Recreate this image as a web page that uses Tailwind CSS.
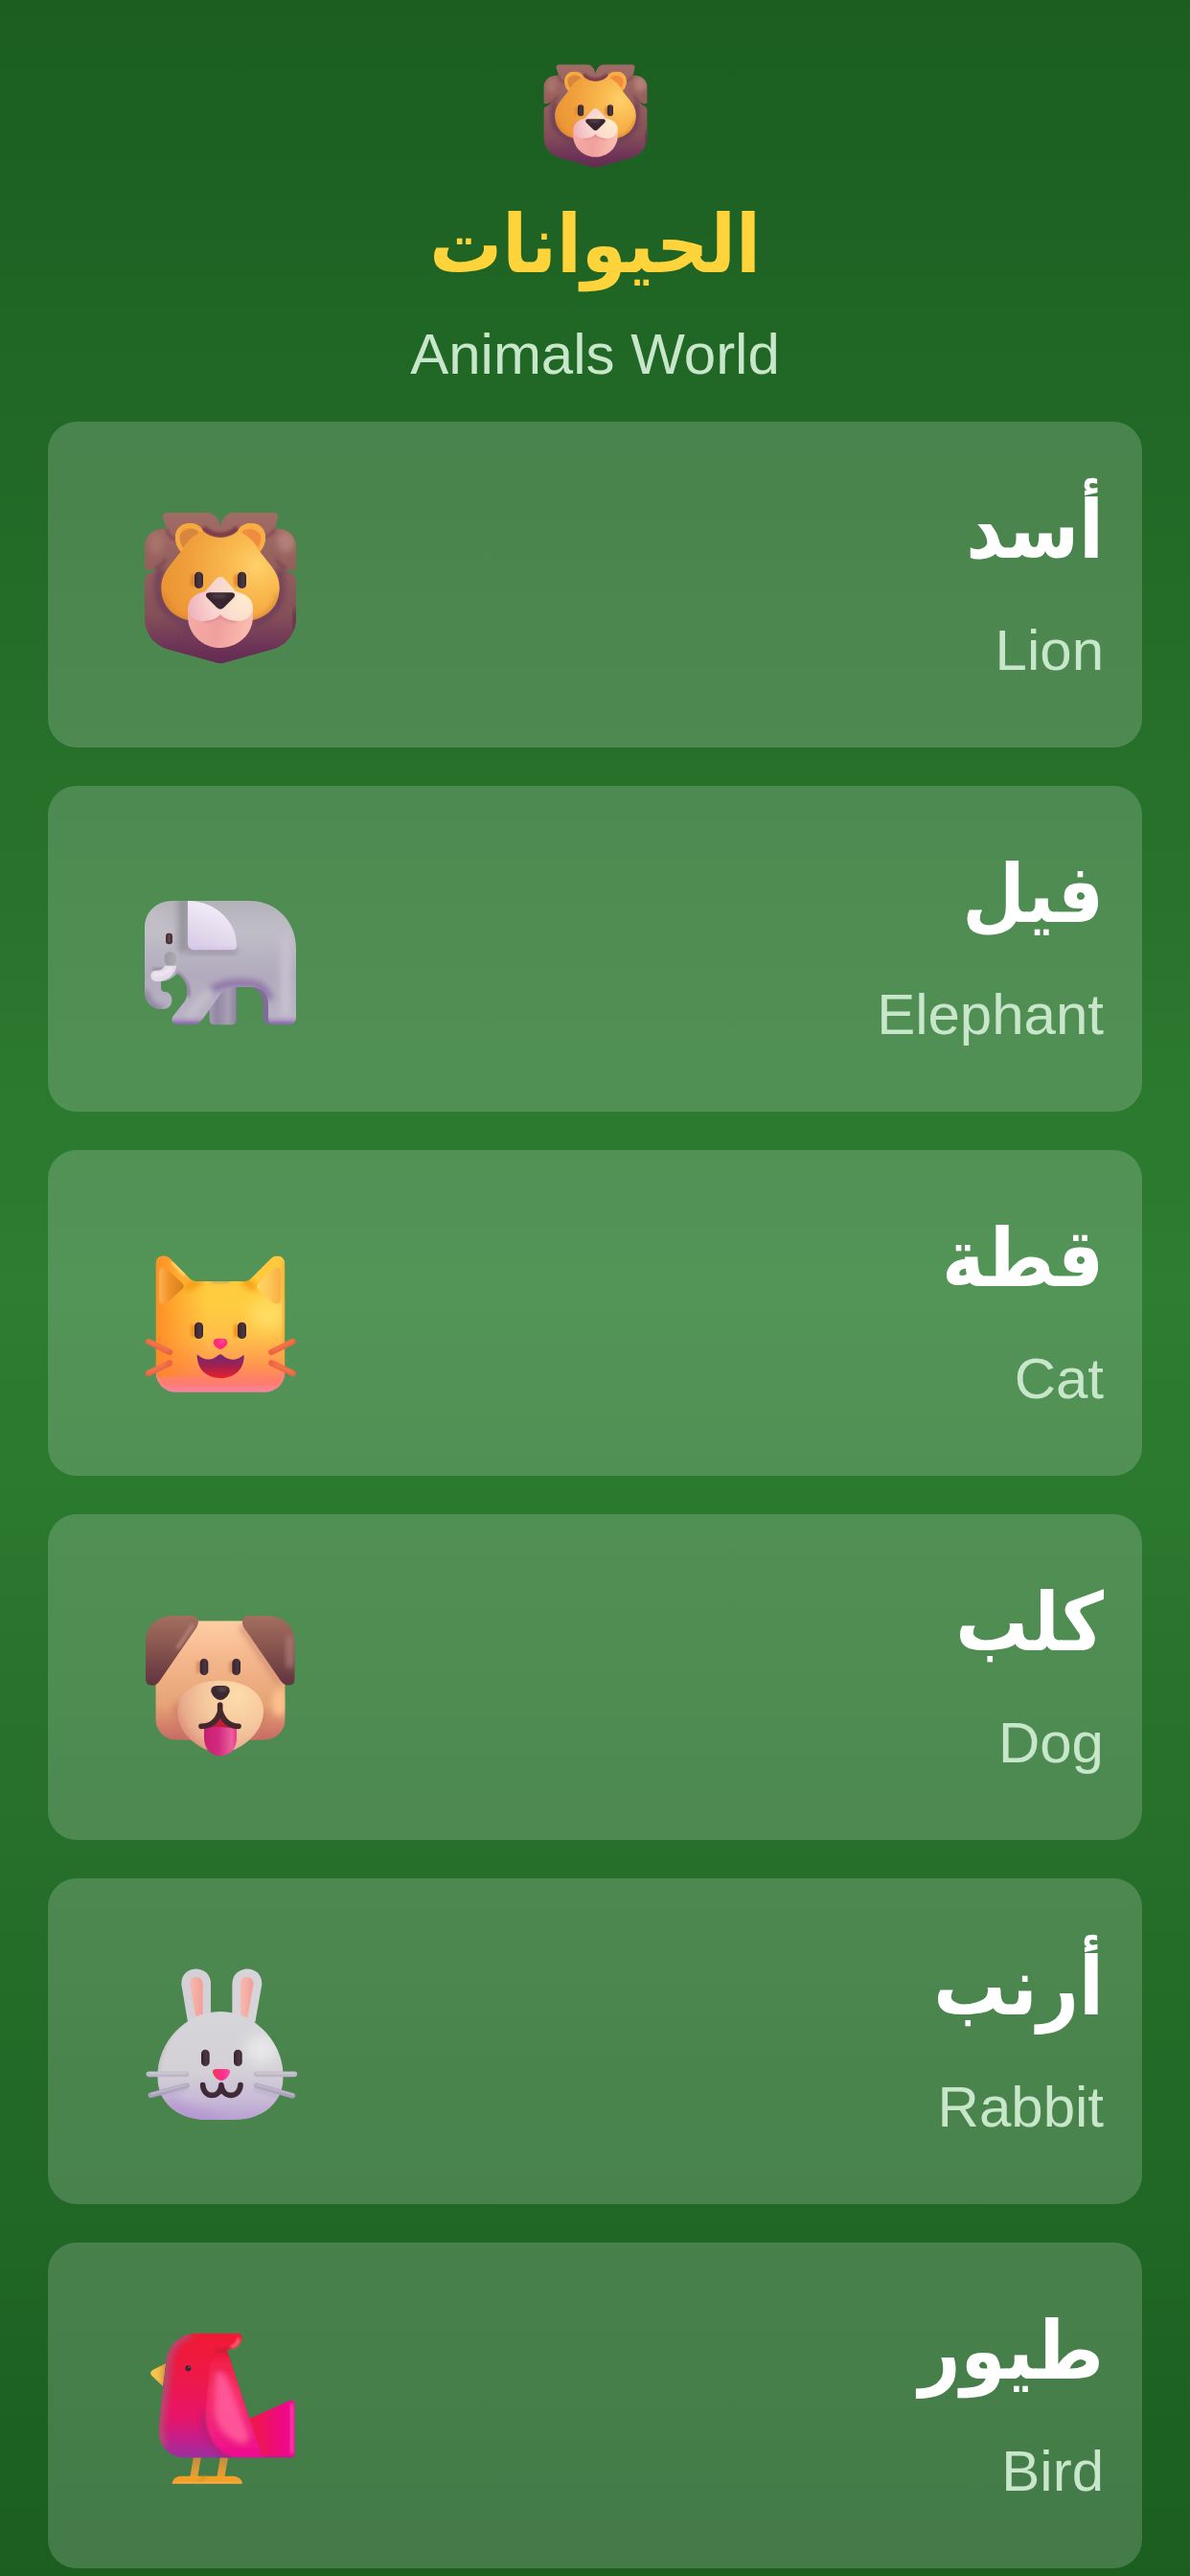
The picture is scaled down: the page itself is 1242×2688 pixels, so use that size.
<!DOCTYPE html>
<html lang="ar">
<head>
<meta charset="utf-8">
<meta name="viewport" content="width=device-width, initial-scale=1">
<title>الحيوانات</title>
<script src="https://cdn.jsdelivr.net/npm/@tailwindcss/browser@4"></script>
</head>
<body class="min-h-screen bg-linear-to-b from-[#1b5e20] via-[#2e7d32] to-[#1b5e20] font-['Liberation_Sans',Arial,'DejaVu_Sans_Condensed','DejaVu_Sans',sans-serif]">

<!-- Shared gradients and the lion, which is drawn twice -->
<svg class="absolute size-0" aria-hidden="true">
  <defs>
    <filter id="b4" x="-50%" y="-50%" width="200%" height="200%"><feGaussianBlur stdDeviation="4"/></filter>
    <filter id="b10" x="-50%" y="-50%" width="200%" height="200%"><feGaussianBlur stdDeviation="10"/></filter>
    <filter id="b20" x="-60%" y="-60%" width="220%" height="220%"><feGaussianBlur stdDeviation="20"/></filter>
    <linearGradient id="eye" x1="0" x2="1" y1="0" y2="0"><stop offset="0" stop-color="#33232c"/><stop offset=".65" stop-color="#4b3744"/><stop offset="1" stop-color="#38242f"/></linearGradient>

    <linearGradient id="mane" x1="0" x2="0" y1="75" y2="545" gradientUnits="userSpaceOnUse"><stop offset="0" stop-color="#a06c66"/><stop offset=".35" stop-color="#96605d"/><stop offset=".68" stop-color="#855058"/><stop offset=".88" stop-color="#6f3558"/><stop offset="1" stop-color="#622b50"/></linearGradient>
    <radialGradient id="lionface" cx="415" cy="240" r="300" gradientUnits="userSpaceOnUse"><stop offset="0" stop-color="#ffd06a"/><stop offset=".3" stop-color="#f9b94e"/><stop offset=".7" stop-color="#f0a03c"/><stop offset="1" stop-color="#eb9535"/></radialGradient>
    <radialGradient id="muzzle" cx="375" cy="345" r="180" gradientUnits="userSpaceOnUse"><stop offset="0" stop-color="#ffeccd"/><stop offset=".6" stop-color="#f9d3cf"/><stop offset="1" stop-color="#eeb2bc"/></radialGradient>
    <linearGradient id="chin" x1="200" x2="400" y1="430" y2="460" gradientUnits="userSpaceOnUse"><stop offset="0" stop-color="#f4aba4"/><stop offset=".45" stop-color="#f0a09e"/><stop offset="1" stop-color="#fcc0b0"/></linearGradient>
    <clipPath id="maneclip"><path d="M132 75H262C282 77 296 94 300 118C304 94 318 77 338 75H468Q484 78 479 92L471 126C508 122 536 146 537 180V247Q535 258 522 255L504 248Q508 258 522 265Q537 272 537 286V405C537 450 510 490 462 503L310 545Q300 549 290 545L138 503C90 490 63 450 63 405V286Q63 272 80 265Q94 260 96 248L78 255Q64 258 63 247V180C64 146 92 122 132 126L121 92Q118 78 132 75Z"/></clipPath>
    <clipPath id="lionclip"><path d="M176 197C152 170 152 126 184 112C210 102 238 112 246 133Q268 153 300 153Q332 153 354 133C362 112 390 102 416 112C448 126 448 170 424 197L458 240C480 268 486 290 485 315C482 370 445 405 390 413H210C155 405 118 370 115 315C114 290 120 268 142 240Z"/></clipPath>

    <symbol id="lion" viewBox="0 0 600 600">
      <g clip-path="url(#maneclip)">
        <rect x="50" y="60" width="500" height="500" fill="url(#mane)"/>
        <ellipse cx="505" cy="165" rx="28" ry="34" fill="#b27f77" filter="url(#b10)"/>
        <ellipse cx="100" cy="170" rx="24" ry="34" fill="#a8736c" filter="url(#b10)"/>
        <path d="M132 126Q138 155 165 160M471 126Q462 145 440 150M96 248Q120 240 130 220M504 248Q485 240 475 220" fill="none" stroke="#7a3f4e" stroke-width="8" filter="url(#b4)" opacity=".8"/>
        <path d="M246 122Q270 145 300 145Q330 145 354 122" fill="none" stroke="#7b3b45" stroke-width="16" filter="url(#b4)"/>
        <path d="M115 250Q90 330 125 375Q170 420 200 425V480M485 250Q500 340 470 380Q430 420 400 425" fill="none" stroke="#6d3c58" stroke-width="20" filter="url(#b10)"/>
        <path d="M537 380V440H530" fill="none" stroke="#66304a" stroke-width="24" filter="url(#b10)"/>
      </g>
      <g clip-path="url(#lionclip)">
        <rect x="100" y="90" width="400" height="330" fill="url(#lionface)"/>
        <path d="M176 197C160 165 168 130 205 125Q222 125 236 136Q198 155 176 197Z" fill="#d88540"/>
        <path d="M424 197C440 165 432 130 395 125Q378 125 364 136Q402 155 424 197Z" fill="#f08b3f"/>
        <path d="M176 197C152 170 152 126 184 112C210 102 238 112 246 133" fill="none" stroke="#f6aa3d" stroke-width="28"/>
        <path d="M424 197C448 170 448 126 416 112C390 102 362 112 354 133" fill="none" stroke="#faad42" stroke-width="28"/>
        <path d="M115 330Q135 410 210 416H390Q465 410 485 330" fill="none" stroke="#d97c31" stroke-width="14" filter="url(#b10)"/>
        <rect x="207" y="268" width="16" height="38" rx="8" fill="#d98330" filter="url(#b4)"/>
        <rect x="343" y="268" width="16" height="38" rx="8" fill="#d98330" filter="url(#b4)"/>
      </g>
      <path d="M198 375H402V398C402 455 356 498 300 498S198 455 198 398Z" fill="url(#chin)"/>
      <path d="M250 414Q285 412 300 396Q315 412 350 414" fill="none" stroke="#df8689" stroke-width="9" filter="url(#b4)"/>
      <path d="M284 285Q300 266 316 285L348 322Q402 332 402 374Q398 414 350 414Q315 412 300 394Q285 412 250 414Q202 414 198 374Q202 332 252 322Z" fill="url(#muzzle)"/>
      <path d="M265 325H335Q350 326 343 340L311 372Q300 383 289 372L257 340Q250 326 265 325Z" fill="#38252f"/>
      <ellipse cx="296" cy="336" rx="24" ry="6" fill="#51424b" filter="url(#b4)"/>
      <rect x="219" y="260" width="27" height="52" rx="13" fill="url(#eye)"/>
      <rect x="354" y="260" width="27" height="52" rx="13" fill="url(#eye)"/>
    </symbol>
  </defs>
</svg>

<main class="flex flex-col px-[50px] pt-[50px] pb-2">
  <header class="flex flex-col items-center text-center">
    <svg class="size-[137px]" role="img" aria-label="Lion"><use href="#lion"/></svg>
    <h1 dir="rtl" class="mt-3 text-[84px] leading-[112px] font-bold text-[#ffd43b]">الحيوانات</h1>
    <p lang="en" class="mt-6 text-[60px] leading-[70px] text-[#c8e6c9]">Animals World</p>
  </header>

  <ul class="mt-[35px] flex flex-col gap-10">
    <li class="flex h-[340px] items-center justify-between rounded-[30px] bg-white/18 pr-10 pl-20">
      <svg class="size-[200px]" role="img" aria-label="Lion"><use href="#lion"/></svg>
      <div class="flex flex-col items-end gap-11">
        <h2 dir="rtl" class="text-[84px] leading-[94px] font-bold text-white">أسد</h2>
        <p lang="en" class="text-[60px] leading-[70px] text-[#c8e6c9]">Lion</p>
      </div>
    </li>

    <li class="flex h-[340px] items-center justify-between rounded-[30px] bg-white/18 pr-10 pl-20">
      <svg class="size-[200px]" viewBox="0 -30 600 600" role="img" aria-label="Elephant">
        <defs>
          <linearGradient id="el" x1="0" x2="0" y1="120" y2="508" gradientUnits="userSpaceOnUse"><stop offset="0" stop-color="#b4b3b9"/><stop offset=".25" stop-color="#bfbdc7"/><stop offset=".6" stop-color="#b2abbd"/><stop offset=".93" stop-color="#b9b2c4"/><stop offset="1" stop-color="#9a7bb8"/></linearGradient>
          <linearGradient id="elback" x1="265" x2="350" y1="0" y2="0" gradientUnits="userSpaceOnUse"><stop offset="0" stop-color="#a79ab5"/><stop offset=".3" stop-color="#9288a3"/><stop offset=".7" stop-color="#a79fb3"/><stop offset="1" stop-color="#8f829f"/></linearGradient>
          <linearGradient id="ear" x1="300" x2="250" y1="140" y2="272" gradientUnits="userSpaceOnUse"><stop offset="0" stop-color="#f2ecf8"/><stop offset=".6" stop-color="#e3daec"/><stop offset="1" stop-color="#dacbea"/></linearGradient>
          <linearGradient id="cheek" x1="124" x2="166" y1="0" y2="0" gradientUnits="userSpaceOnUse"><stop offset="0" stop-color="#9b98a2"/><stop offset="1" stop-color="#b1adb8"/></linearGradient>
          <clipPath id="elclip"><path d="M150 120H392C475 120 537 185 537 268V486Q537 508 515 508H472Q450 508 450 486V445C450 408 430 390 395 390H345Q318 390 302 410L245 490Q232 507 214 507H165Q141 503 151 482L190 432C203 405 198 370 165 347Q145 370 114 373V392Q114 405 128 405C156 408 156 458 122 459C88 460 63 438 63 405V205C63 155 100 120 150 120Z"/></clipPath>
        </defs>
        <path d="M290 385H350V492Q350 508 334 508H282Q266 508 266 492V440Z" fill="url(#elback)"/>
        <path d="M395 388H455V508Q433 507 433 484V440Q430 400 395 388Z" fill="#7f6d95"/>
        <g clip-path="url(#elclip)">
          <rect x="60" y="115" width="480" height="400" fill="url(#el)"/>
          <rect x="167" y="110" width="36" height="170" fill="#8f8d94" opacity=".8" filter="url(#b10)"/>
          <rect x="200" y="270" width="152" height="16" fill="#8d8599" opacity=".8" filter="url(#b10)"/>
          <ellipse cx="95" cy="185" rx="28" ry="50" fill="#c2c0c5" filter="url(#b20)"/>
          <path d="M270 400Q310 372 400 380Q440 386 455 430" fill="none" stroke="#8869a5" stroke-width="24" opacity=".85" filter="url(#b10)"/>
          <rect x="489" y="230" width="32" height="250" fill="#c6c0d0" filter="url(#b10)"/>
          <path d="M270 400L200 480" stroke="#c5c0cc" stroke-width="24" filter="url(#b10)"/>
          <rect x="145" y="500" width="100" height="14" fill="#8d66ae" filter="url(#b4)"/>
          <rect x="450" y="500" width="90" height="14" fill="#8d66ae" filter="url(#b4)"/>
          <path d="M63 400Q75 460 122 460" fill="none" stroke="#8a7a9d" stroke-width="20" filter="url(#b10)"/>
          <path d="M165 345Q205 375 200 420" fill="none" stroke="#8e7ba1" stroke-width="10" filter="url(#b4)"/>
          <rect x="88" y="330" width="32" height="8" fill="#8c8597" filter="url(#b4)"/>
        </g>
        <rect x="122" y="268" width="48" height="56" rx="24" fill="#b9b5bf"/>
        <rect x="125" y="279" width="38" height="45" rx="19" fill="url(#cheek)"/>
        <path d="M126 323H163C158 352 132 375 98 372C77 370 76 340 98 338Q118 340 126 323Z" fill="#e4dbea"/>
        <path d="M92 350Q130 355 146 328" fill="none" stroke="#f3eef5" stroke-width="8" filter="url(#b4)"/>
        <path d="M198 120C285 120 351 185 351 260Q350 273 338 273H218Q198 272 198 252Z" fill="url(#ear)"/>
        <rect x="215" y="266" width="125" height="5" fill="#d2bfe6" filter="url(#b4)"/>
        <rect x="129" y="221" width="21" height="35" rx="10" fill="#4b2f3a"/>
        <rect x="137" y="226" width="6" height="24" rx="3" fill="#6a4d50"/>
      </svg>
      <div class="flex flex-col items-end gap-11">
        <h2 dir="rtl" class="text-[84px] leading-[94px] font-bold text-white">فيل</h2>
        <p lang="en" class="text-[60px] leading-[70px] text-[#c8e6c9]">Elephant</p>
      </div>
    </li>

    <li class="flex h-[340px] items-center justify-between rounded-[30px] bg-white/18 pr-10 pl-20">
      <svg class="size-[200px]" viewBox="0 -30 600 600" role="img" aria-label="Cat">
        <defs>
          <linearGradient id="cat" x1="0" x2="0" y1="90" y2="518" gradientUnits="userSpaceOnUse"><stop offset="0" stop-color="#ffc83c"/><stop offset=".35" stop-color="#ffcd40"/><stop offset=".6" stop-color="#ffbf48"/><stop offset=".8" stop-color="#ff974f"/><stop offset=".93" stop-color="#ff7b6b"/><stop offset="1" stop-color="#f884a2"/></linearGradient>
          <linearGradient id="catside" x1="97" x2="260" y1="0" y2="0" gradientUnits="userSpaceOnUse"><stop offset="0" stop-color="#ff8420"/><stop offset="1" stop-color="#ff8a20" stop-opacity="0"/></linearGradient>
          <linearGradient id="mouth" x1="0" x2="0" y1="400" y2="474" gradientUnits="userSpaceOnUse"><stop offset="0" stop-color="#6f2a78"/><stop offset=".5" stop-color="#a3204f"/><stop offset="1" stop-color="#e8202c"/></linearGradient>
          <linearGradient id="catearl" x1="108" x2="185" y1="0" y2="0" gradientUnits="userSpaceOnUse"><stop offset="0" stop-color="#ffb052"/><stop offset=".4" stop-color="#f09428"/><stop offset="1" stop-color="#d9801c"/></linearGradient>
          <linearGradient id="catearr" x1="415" x2="490" y1="0" y2="0" gradientUnits="userSpaceOnUse"><stop offset="0" stop-color="#ffda68"/><stop offset=".6" stop-color="#fcc155"/><stop offset="1" stop-color="#f8ae42"/></linearGradient>
          <clipPath id="catclip"><path d="M98 116C98 92 124 85 140 98L206 164Q213 171 222 171H378Q387 171 394 164L460 98C476 85 502 92 502 116V455C502 492 472 518 438 518H162C128 518 98 492 98 455Z"/></clipPath>
        </defs>
        <g clip-path="url(#catclip)">
          <rect x="90" y="80" width="420" height="450" fill="url(#cat)"/>
          <rect x="90" y="80" width="220" height="390" fill="url(#catside)" opacity=".85"/>
          <ellipse cx="450" cy="275" rx="60" ry="50" fill="#ffdc62" filter="url(#b20)"/>
          <path d="M190 195L240 165M410 195L370 165" stroke="#f49a12" stroke-width="22" filter="url(#b10)"/>
          <rect x="270" y="168" width="60" height="9" fill="#cfa85a" filter="url(#b4)"/>
          <path d="M150 110L190 150" stroke="#ffe07a" stroke-width="12" filter="url(#b4)"/>
          <rect x="495" y="110" width="8" height="330" fill="#f9a53c" filter="url(#b4)"/>
          <path d="M95 450Q100 520 165 520H435Q500 520 503 450" fill="none" stroke="#fb82a0" stroke-width="8" filter="url(#b4)"/>
          <rect x="207" y="306" width="16" height="40" rx="8" fill="#ef8d1c" filter="url(#b4)"/>
          <rect x="342" y="306" width="16" height="40" rx="8" fill="#ef8d1c" filter="url(#b4)"/>
        </g>
        <path d="M108 140Q112 122 130 130L180 176Q190 186 180 196L132 239Q112 248 108 228Z" fill="url(#catearl)"/>
        <path d="M490 140Q486 122 468 130L420 176Q410 186 420 196L466 239Q486 248 490 228Z" fill="url(#catearr)"/>
        <g fill="none" stroke-linecap="round" stroke-width="19">
          <path d="M75 360L141 393M75 459L141 427" stroke="#e96545"/>
          <path d="M527 360L460 393M527 459L460 427" stroke="#ec6440"/>
        </g>
        <g fill="none" stroke-linecap="round" stroke-width="5" stroke="#f98a52" filter="url(#b4)"><path d="M74 356L135 386M74 455L130 428M526 356L468 385M526 456L468 430"/></g>
        <rect x="219" y="299" width="27" height="52" rx="13" fill="url(#eye)"/>
        <rect x="354" y="299" width="27" height="52" rx="13" fill="url(#eye)"/>
        <path d="M292 350H308Q322 350 322 363Q320 375 306 382Q300 386 294 382Q280 375 278 363Q278 350 292 350Z" fill="#ff2a80"/>
        <ellipse cx="306" cy="360" rx="8" ry="5" fill="#ff5f97" filter="url(#b4)"/>
        <path d="M227 400Q262 430 293 403Q300 396 307 403Q338 430 374 401C376 445 345 474 300 474S226 445 227 400Z" fill="url(#mouth)"/>
      </svg>
      <div class="flex flex-col items-end gap-11">
        <h2 dir="rtl" class="text-[84px] leading-[94px] font-bold text-white">قطة</h2>
        <p lang="en" class="text-[60px] leading-[70px] text-[#c8e6c9]">Cat</p>
      </div>
    </li>

    <li class="flex h-[340px] items-center justify-between rounded-[30px] bg-white/18 pr-10 pl-20">
      <svg class="size-[200px]" viewBox="0 -30 600 600" role="img" aria-label="Dog">
        <defs>
          <linearGradient id="dog" x1="0" x2="0" y1="94" y2="467" gradientUnits="userSpaceOnUse"><stop offset="0" stop-color="#ffcda3"/><stop offset=".35" stop-color="#f3b58a"/><stop offset=".7" stop-color="#e6a476"/><stop offset=".88" stop-color="#d5806a"/><stop offset="1" stop-color="#c46b67"/></linearGradient>
          <radialGradient id="snout" cx="350" cy="330" r="210" gradientUnits="userSpaceOnUse"><stop offset="0" stop-color="#fddcaa"/><stop offset=".5" stop-color="#f5c79d"/><stop offset=".8" stop-color="#eaad8d"/><stop offset="1" stop-color="#d98776"/></radialGradient>
          <linearGradient id="dogear" x1="0" x2="0" y1="78" y2="296" gradientUnits="userSpaceOnUse"><stop offset="0" stop-color="#a36f60"/><stop offset=".5" stop-color="#86524d"/><stop offset="1" stop-color="#603340"/></linearGradient>
          <linearGradient id="tongue" x1="249" x2="351" y1="0" y2="0" gradientUnits="userSpaceOnUse"><stop offset="0" stop-color="#c81f70"/><stop offset=".45" stop-color="#d22a80"/><stop offset=".85" stop-color="#ec5e9c"/><stop offset="1" stop-color="#e8398a"/></linearGradient>
          <clipPath id="dogclip"><path d="M200 94H400L503 260V400C503 438 474 467 436 467H162C126 467 97 438 97 400V250Z"/></clipPath>
          <clipPath id="dogearl"><path d="M150 78H214Q240 86 226 114L110 282Q98 300 78 295Q66 292 66 276V162C66 112 102 78 150 78Z"/></clipPath>
          <clipPath id="dogearr"><path d="M384 78H449C497 78 533 112 533 162V276Q533 292 520 295Q502 299 489 282L373 114Q360 88 384 78Z"/></clipPath>
        </defs>
        <g clip-path="url(#dogclip)">
          <rect x="90" y="85" width="420" height="390" fill="url(#dog)"/>
          <ellipse cx="485" cy="350" rx="22" ry="44" fill="#fdc08c" filter="url(#b10)"/>
          <path d="M365 110L485 290" stroke="#d38f72" stroke-width="16" filter="url(#b10)"/>
          <path d="M165 350Q165 450 240 490M430 380Q420 440 360 490" fill="none" stroke="#c97966" stroke-width="24" filter="url(#b10)" opacity=".7"/>
          <rect x="225" y="220" width="14" height="38" rx="7" fill="#d98e5e" filter="url(#b4)"/>
          <rect x="327" y="220" width="14" height="38" rx="7" fill="#d98e5e" filter="url(#b4)"/>
        </g>
        <g clip-path="url(#dogearl)">
          <rect x="60" y="70" width="180" height="235" fill="url(#dogear)"/>
          <path d="M215 105L165 180" stroke="#b48177" stroke-width="10" filter="url(#b4)"/>
        </g>
        <g clip-path="url(#dogearr)">
          <rect x="360" y="70" width="180" height="235" fill="url(#dogear)"/>
          <rect x="508" y="140" width="20" height="100" fill="#ab7874" filter="url(#b10)"/>
        </g>
        <path d="M300 281C378 281 435 318 435 377C435 435 385 478 345 497H255C212 478 165 435 165 377C165 318 222 281 300 281Z" fill="url(#snout)"/>
        <path d="M249 422H351V460C351 494 330 517 300 517S249 494 249 460Z" fill="url(#tongue)"/>
        <path d="M249 424Q285 412 300 392Q315 412 351 430Z" fill="#c31c3c"/>
        <path d="M299 357V378Q285 424 240 424M300 378Q315 424 357 424" fill="none" stroke="#46272c" stroke-width="17" stroke-linecap="round" stroke-linejoin="round"/>
        <path d="M290 297H310Q332 298 329 316C322 336 308 342 300 342S278 336 271 316Q268 298 290 297Z" fill="#3a2930"/>
        <ellipse cx="306" cy="308" rx="14" ry="7" fill="#57454b" filter="url(#b4)"/>
        <rect x="236" y="212" width="26" height="52" rx="13" fill="url(#eye)"/>
        <rect x="337" y="212" width="26" height="52" rx="13" fill="url(#eye)"/>
      </svg>
      <div class="flex flex-col items-end gap-11">
        <h2 dir="rtl" class="text-[84px] leading-[94px] font-bold text-white">كلب</h2>
        <p lang="en" class="text-[60px] leading-[70px] text-[#c8e6c9]">Dog</p>
      </div>
    </li>

    <li class="flex h-[340px] items-center justify-between rounded-[30px] bg-white/18 pr-10 pl-20">
      <svg class="size-[200px]" viewBox="0 0 600 600" role="img" aria-label="Rabbit">
        <defs>
          <linearGradient id="rab" x1="0" x2="0" y1="207" y2="546" gradientUnits="userSpaceOnUse"><stop offset="0" stop-color="#d6d5d9"/><stop offset=".55" stop-color="#d3d1d5"/><stop offset=".8" stop-color="#c9bcd8"/><stop offset="1" stop-color="#b7a0d2"/></linearGradient>
          <linearGradient id="rabear" x1="0" x2="1" y1="0" y2="0"><stop offset="0" stop-color="#f8b9b0"/><stop offset="1" stop-color="#f0a097"/></linearGradient>
          <linearGradient id="rabnose" x1="276" x2="330" y1="0" y2="0" gradientUnits="userSpaceOnUse"><stop offset="0" stop-color="#ee3a50"/><stop offset=".6" stop-color="#ff2f92"/><stop offset="1" stop-color="#ff4aa2"/></linearGradient>
          <linearGradient id="whisk" x1="0" x2="0" y1="395" y2="478" gradientUnits="userSpaceOnUse"><stop offset="0" stop-color="#c2bbca"/><stop offset="1" stop-color="#a79dba"/></linearGradient>
          <clipPath id="rabclip"><path d="M300 207C410 207 497 305 497 410C497 495 430 546 340 546H260C170 546 103 495 103 410C103 305 190 207 300 207Z"/></clipPath>
        </defs>
        <path d="M198 240L178 122C176 58 270 58 270 120V250Z" fill="#d3d1d7"/>
        <path d="M409 240L430 122C432 58 338 58 337 120V250Z" fill="#d6d4d8"/>
        <path d="M204 120C204 92 245 92 245 120V220Q244 231 233 231T222 220Z" fill="url(#rabear)"/>
        <path d="M404 120C404 92 363 92 363 120V220Q363 231 374 231T386 220Z" fill="url(#rabear)"/>
        <g clip-path="url(#rabclip)">
          <rect x="95" y="200" width="410" height="350" fill="url(#rab)"/>
          <ellipse cx="430" cy="325" rx="50" ry="45" fill="#e8e8ea" filter="url(#b20)"/>
          <path d="M105 400Q115 290 190 235" fill="none" stroke="#c5c0ca" stroke-width="10" filter="url(#b4)"/>
          <path d="M130 480Q190 545 290 546" fill="none" stroke="#b08fce" stroke-width="30" filter="url(#b20)"/>
          <path d="M110 475L195 450M405 450L490 477" stroke="#b9aac8" stroke-width="7" filter="url(#b4)"/>
        </g>
        <path d="M76 403H194M82 469L195 439M413 403H532M413 439L526 470" fill="none" stroke="url(#whisk)" stroke-width="17" stroke-linecap="round"/>
        <path d="M78 400H192M415 400H530" fill="none" stroke="#cec8d4" stroke-width="5" stroke-linecap="round"/>
        <path d="M84 465L192 437M416 437L528 467" fill="none" stroke="#c3bbcd" stroke-width="4" stroke-linecap="round"/>
        <path d="M245 437C247 480 301 480 303 437C305 480 361 480 363 437" fill="none" stroke="#412a38" stroke-width="17" stroke-linecap="round" stroke-linejoin="round"/>
        <path d="M286 387H320Q334 388 329 401Q322 417 308 422Q303 424 298 422Q284 417 277 401Q273 388 286 387Z" fill="url(#rabnose)"/>
        <rect x="240" y="326" width="26" height="52" rx="13" fill="url(#eye)"/>
        <rect x="342" y="326" width="26" height="52" rx="13" fill="url(#eye)"/>
      </svg>
      <div class="flex flex-col items-end gap-11">
        <h2 dir="rtl" class="text-[84px] leading-[94px] font-bold text-white">أرنب</h2>
        <p lang="en" class="text-[60px] leading-[70px] text-[#c8e6c9]">Rabbit</p>
      </div>
    </li>

    <li class="flex h-[340px] items-center justify-between rounded-[30px] bg-white/18 pr-10 pl-20">
      <svg class="size-[200px]" viewBox="0 0 600 600" role="img" aria-label="Bird">
        <defs>
          <linearGradient id="bird" x1="0" x2="0" y1="75" y2="464" gradientUnits="userSpaceOnUse"><stop offset="0" stop-color="#f01a34"/><stop offset=".35" stop-color="#ee1848"/><stop offset=".68" stop-color="#e8146a"/><stop offset=".85" stop-color="#c41f8a"/><stop offset="1" stop-color="#9a30a0"/></linearGradient>
          <linearGradient id="tail" x1="395" x2="533" y1="0" y2="0" gradientUnits="userSpaceOnUse"><stop offset="0" stop-color="#f01848"/><stop offset=".7" stop-color="#ee0a80"/><stop offset="1" stop-color="#f00a98"/></linearGradient>
          <linearGradient id="wing" x1="0" x2="0" y1="130" y2="464" gradientUnits="userSpaceOnUse"><stop offset="0" stop-color="#f01a40"/><stop offset=".4" stop-color="#f52f66"/><stop offset=".75" stop-color="#f22080"/><stop offset="1" stop-color="#ee0890"/></linearGradient>
          <linearGradient id="leg" x1="0" x2="0" y1="460" y2="545" gradientUnits="userSpaceOnUse"><stop offset="0" stop-color="#c08a3c"/><stop offset=".5" stop-color="#de9a38"/><stop offset="1" stop-color="#f0a228"/></linearGradient>
          <linearGradient id="beak" x1="80" x2="130" y1="0" y2="0" gradientUnits="userSpaceOnUse"><stop offset="0" stop-color="#fbc94a"/><stop offset=".5" stop-color="#f3c04b"/><stop offset="1" stop-color="#c99246"/></linearGradient>
          <clipPath id="birdclip"><path d="M228 74H355Q372 77 367 94C360 116 345 125 320 125L432 464H195C140 464 103 425 107 370L130 165C135 110 175 74 228 74Z"/></clipPath>
          <clipPath id="wingclip"><path d="M268 165L320 125L432 464H350C290 455 250 400 252 330Z"/></clipPath>
        </defs>
        <path d="M216 460H240L228 530H204ZM300 460H325L312 530H288Z" fill="url(#leg)"/>
        <path d="M148 545Q152 522 176 521H340Q366 523 369 545Z" fill="#f0a126"/>
        <path d="M234 545Q238 526 258 522" fill="none" stroke="#c98722" stroke-width="5" filter="url(#b4)"/>
        <rect x="152" y="539" width="214" height="5" fill="#f8ab4e"/>
        <path d="M130 168L88 189Q76 198 86 208L120 240Z" fill="url(#beak)"/>
        <path d="M390 342L518 284Q533 282 533 298V450Q533 463 520 463H415Z" fill="url(#tail)"/>
        <rect x="520" y="295" width="8" height="155" fill="#ff4aae" filter="url(#b4)"/>
        <rect x="425" y="458" width="100" height="5" fill="#c01a96"/>
        <g clip-path="url(#birdclip)">
          <rect x="100" y="70" width="340" height="400" fill="url(#bird)"/>
          <path d="M205 70Q135 95 130 165L107 370Q105 400 120 430" fill="none" stroke="#b44a70" stroke-width="34" filter="url(#b10)"/>
          <path d="M285 128H325L340 170" fill="none" stroke="#c01a34" stroke-width="8" filter="url(#b4)"/>
          <path d="M250 320Q245 420 335 462" fill="none" stroke="#b01e72" stroke-width="16" filter="url(#b10)"/>
          <g clip-path="url(#wingclip)">
            <path d="M265 150H335L440 466H345C290 450 255 400 254 330Z" fill="url(#wing)" filter="url(#b4)"/>
            <path d="M285 200Q305 185 322 215L390 400Q385 430 345 412Q290 380 282 320Z" fill="#ff5a9b" filter="url(#b10)" opacity=".9"/>
          </g>
        </g>
        <path d="M337 116Q354 112 357 94" fill="none" stroke="#ff6a7a" stroke-width="10" stroke-linecap="round" filter="url(#b4)"/>
        <circle cx="199" cy="184" r="9" fill="#3d2430"/>
        <circle cx="202" cy="181" r="3" fill="#6f5a62"/>
      </svg>
      <div class="flex flex-col items-end gap-11">
        <h2 dir="rtl" class="text-[84px] leading-[94px] font-bold text-white">طيور</h2>
        <p lang="en" class="text-[60px] leading-[70px] text-[#c8e6c9]">Bird</p>
      </div>
    </li>
  </ul>
</main>
</body>
</html>
